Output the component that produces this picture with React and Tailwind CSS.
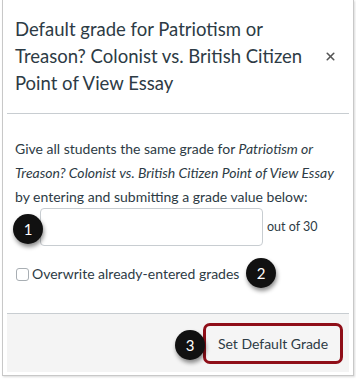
import { X } from "lucide-react";

const Badge = ({ n, className }) => (
  <div
    className={`absolute flex h-[30px] w-[30px] items-center justify-center rounded-full bg-[#111] text-[15px] text-white shadow-[1px_3px_4px_rgba(0,0,0,0.45)] ${className}`}
  >
    {n}
  </div>
);

export default function App() {
  return (
    <div
      className="relative h-[379px] w-[356px] overflow-hidden bg-white text-[#2d3b45]"
      style={{ fontFamily: "Lato, 'Liberation Sans', sans-serif" }}
    >
      <div className="ml-[2px] w-[352px] border-x border-b border-[#c8c8c8] px-[4px] pb-[3px] shadow-[1px_1px_2px_rgba(0,0,0,0.15)]">
        {/* header */}
        <div className="flex items-center border-b border-[#c8cdd1] pb-[16px] pl-[8px] pr-[12px] pt-[16px]">
          <h2 className="w-[300px] text-[18.5px] font-normal leading-[27px]">
            Default grade for Patriotism or Treason? Colonist vs. British
            Citizen Point of View Essay
          </h2>
          <X className="ml-auto h-[13px] w-[13px] text-[#555]" strokeWidth={3} />
        </div>

        {/* body */}
        <div className="h-[199px] pl-[8px] pt-[23px]">
          <p className="text-[14px] leading-[24px]">
            Give all students the same grade for{" "}
            <em>Patriotism or Treason? Colonist vs. British Citizen Point of View Essay</em>{" "}
            by entering and submitting a grade value below:
          </p>
          <div className="-mt-px flex items-end pl-[25px]">
            <input
              type="text"
              className="h-[38px] w-[223px] rounded-[4px] border border-[#c8cdd1] bg-white"
            />
            <span className="mb-[9px] ml-[4px] text-[12.5px]">out of 30</span>
          </div>
          <label className="mt-[20px] flex items-center gap-[3px] text-[14px] leading-[16px]">
            <span className="ml-[1px] h-[13px] w-[13px] rounded-[3px] border border-[#a8aeb3] bg-white" />
            Overwrite already-entered grades
          </label>
        </div>

        {/* footer */}
        <div className="flex h-[59px] items-center justify-end border-t border-[#c8cdd1] bg-[#f4f4f4] pr-[6px]">
          <button className="flex h-[41px] w-[140px] items-center justify-center rounded-[7px] border-[3px] border-[#8f0e18] bg-[#f5f5f5] text-[14px] text-[#2d3b45]">
            Set Default Grade
          </button>
        </div>
      </div>

      <Badge n="1" className="left-[13px] top-[214px]" />
      <Badge n="2" className="left-[246px] top-[258px]" />
      <Badge n="3" className="left-[175px] top-[330px]" />
    </div>
  );
}
